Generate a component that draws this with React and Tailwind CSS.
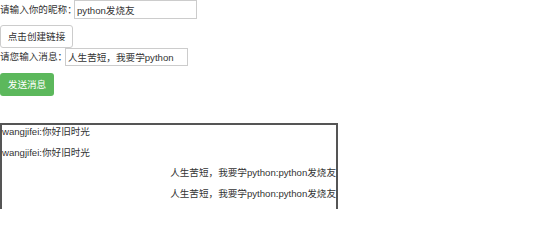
import React from 'react';

const messages = [
    { text: 'wangjifei:你好旧时光', mine: false },
    { text: 'wangjifei:你好旧时光', mine: false },
    { text: '人生苦短，我要学python:python发烧友', mine: true },
    { text: '人生苦短，我要学python:python发烧友', mine: true },
];

const App = () => {
    return (
        <div className="font-['Liberation_Sans','Noto_Sans_CJK_SC',sans-serif] text-[9.6px] leading-[13.7px] text-[#333] bg-white h-[209px] overflow-hidden">
            <div className="flex items-center h-[19px]">
                <span className="w-[74px] shrink-0 whitespace-nowrap">请输入你的昵称：</span>
                <input
                    className="w-[123px] h-[19px] border border-[#ccc] px-[2px] text-[9.6px] text-[#333] outline-none"
                    type="text"
                    defaultValue="python发烧友"
                />
            </div>
            <button className="block mt-[6px] w-[73px] h-[23px] border border-[#ccc] rounded-[3px] bg-white text-[#333] whitespace-nowrap">
                点击创建链接
            </button>
            <div className="flex items-center h-[18px]">
                <span className="w-[65px] shrink-0 whitespace-nowrap">请您输入消息：</span>
                <input
                    className="w-[123px] h-[18px] border border-[#ccc] px-[2px] text-[9.6px] text-[#333] outline-none"
                    type="text"
                    defaultValue="人生苦短，我要学python"
                />
            </div>
            <button className="block mt-[7px] w-[54px] h-[23px] rounded-[3px] bg-[#5cb85c] text-white whitespace-nowrap">
                发送消息
            </button>
            <div className="mt-[27px] w-[338px] h-[86px] border-2 border-[#555] border-b-0">
                {messages.map((m, i) => (
                    <p key={i} className={`mb-[7px] whitespace-nowrap ${m.mine ? 'text-right' : 'text-left'}`}>
                        {m.text}
                    </p>
                ))}
            </div>
        </div>
    );
};

export default App;
